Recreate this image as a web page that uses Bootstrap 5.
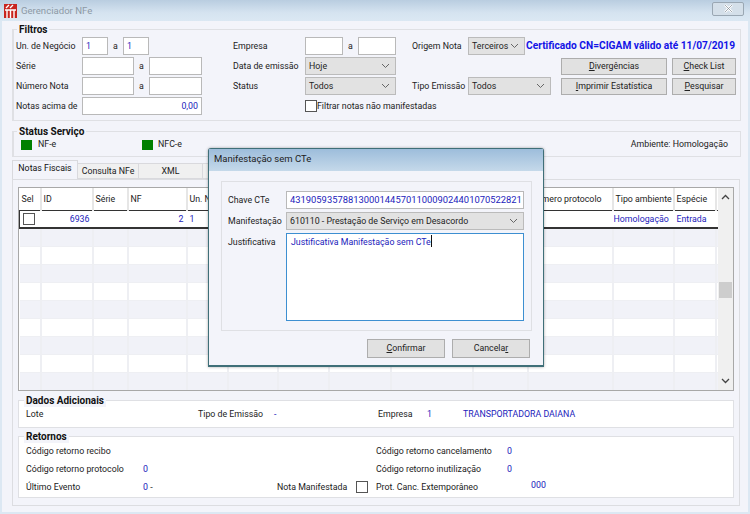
<!DOCTYPE html>
<html lang="pt-BR">
<head>
  <meta charset="UTF-8" />
  <title>Gerenciador NFe</title>
  <link href="https://cdn.jsdelivr.net/npm/bootstrap@5.3.2/dist/css/bootstrap.min.css" rel="stylesheet">
  <style>
    html, body { margin: 0; height: 514px; overflow: hidden; }
    body { font-family: Roboto, "Liberation Sans", sans-serif; font-size: 8.8px; line-height: 14px; color: #222; background: #dce8f3; white-space: nowrap; }
    .win { position: relative; width: 750px; height: 514px; }
    .win-title { height: 21px; background: linear-gradient(#b9cde0, #d5e3f0 60%, #dbe8f3); padding-left: 4px; color: #8d99a5; font-size: 9.6px; }
    .win-close { width: 32px; height: 14px; margin-right: 6px; margin-top: -4px; border: 1px solid #9aa7b3; background: #d4dfe9; border-radius: 2px; }
    .win-body { margin: 0 2px; height: 491px; background: #f3f4fa; padding: 8px 7px 0 10px; }
    .grp { position: relative; border: 1px solid #dfe0e4; border-left-width: 2px; background: #f3f4fa; }
    .grp-title { position: absolute; top: -7px; left: 3px; padding: 0 2px; font-weight: 700; font-size: 10px; color: #111; background: #f3f4fa; line-height: 13px; }
    .filtros { height: 92px; padding: 6px 0 0 2px; }
    .fcol { flex: none; }
    .frow { display: flex; align-items: center; height: 20px; }
    .lbl { flex: none; }
    .box { flex: none; height: 18px; border: 1px solid #b9b9b9; background: #fff; color: #2222bb; padding: 0 3px; line-height: 16px; }
    .sel { flex: none; height: 18px; border: 1px solid #bbb; background: #e2e2e2; padding: 0 3px; line-height: 16px; display: flex; justify-content: space-between; align-items: center; }
    .sel svg { flex: none; margin-right: 2px; }
    .wbtn { flex: none; height: 17px; border: 1px solid #adadad; background: #e1e1e1; text-align: center; line-height: 15px; padding: 0; color: #222; }
    .wbtn u { text-underline-offset: 1px; }
    .sq { flex: none; display: inline-block; width: 12px; height: 12px; border: 1px solid #555; background: #fff; }
    .cert { color: #1414e6; font-weight: 700; font-size: 10.2px; white-space: nowrap; }
    .st-grp { height: 26px; margin-top: 10px; padding: 5px 0 0 7px; }
    .led { flex: none; width: 11px; height: 10px; background: #008000; }
    .tabs-row { display: flex; height: 16px; margin-top: 6px; align-items: flex-end; }
    .tab-on { width: 66px; height: 19px; border: 1px solid #d9d9dd; border-bottom: 0; background: #f3f4fa; text-align: center; position: relative; z-index: 2; color: #111; line-height: 15px; }
    .tab-off { height: 16px; border: 1px solid #d9d9dd; border-left: 0; background: #f0f0f0; text-align: center; line-height: 15px; }
    .tab-panel { height: 327px; border: 1px solid #dcdde1; background: #f3f4fa; padding: 7px 5px 0 5px; margin-right: 1px; }
    .grid-wrap { position: relative; height: 204px; border: 1px solid #a8a8a8; background: #fff; overflow: hidden; }
    .grid-t { table-layout: fixed; width: 699px; margin: 0; border-collapse: collapse; }
    .grid-t th, .grid-t td { padding: 0 2px; border: 0; border-right: 2px solid #eeeff3; font-weight: 400; overflow: hidden; height: 18px; box-shadow: none; background: transparent; font-size: 8.8px; }
    .grid-t thead th { height: 22px; color: #222; border-right-color: #e6e6e6; vertical-align: top; padding-top: 4px; }
    .grid-t tbody td { border-bottom: 1px solid #eeeff3; }
    .grid-t tbody tr.cur td { height: 18px; border-right-color: transparent; color: #2222bb; border-top: 1px solid #333; border-bottom: 2px solid #333; padding-top: 1px; }
    .grid-t tbody tr.cur td:first-child { border-left: 1px solid #333; }
    .grid-t tbody tr.cur td:last-child { border-right: 1px solid #333; }
    .grid-t tbody tr.cur td.tight { padding-left: 0; }
    .grid-t tbody tr.alt td { background: #f1f2f8; }
    .pick { display: block; margin: 1px 0 0 1px; }
    .sbar { position: absolute; top: 0; right: 0; width: 15px; height: 100%; background: #f0f0f0; }
    .sthumb { position: absolute; top: 94px; left: 1px; width: 13px; height: 16px; background: #cdcdcd; }
    .sbar svg { position: absolute; left: 3px; }
    .dados { height: 28px; margin-top: 9px; background: #fff; padding: 6px 0 0 7px; }
    .grp-white { background: #fff; border-left-width: 1px; }
    .grp-white .grp-title { left: 5px; }
    .grp-white span { flex: none; }
    .ret { height: 62px; margin-top: 8px; padding: 7px 0 0 7px; }
    .blue { color: #2222bb; }
    .dlg { position: absolute; left: 208px; top: 148px; width: 336px; height: 219px; z-index: 5; background: #f3f4fa; border: 1px solid #3f6f78; border-bottom-width: 2px; border-radius: 3px 3px 0 0; box-shadow: 0 0 3px rgba(0,0,0,.35); }
    .dlg-title { height: 22px; background: linear-gradient(#9dbddb, #c5d9ea); font-size: 9.5px; line-height: 20px; padding-left: 5px; color: #222; }
    .dlg-grp { margin: 10px 11px 0 12px; height: 150px; border: 1px solid #dfe0e4; padding: 9px 7px 0 6px; }
    .drow { display: flex; margin-bottom: 3px; }
    .drow .lbl { width: 58px; padding-top: 2px; }
    .dlg .box, .dlg .sel { flex: 1 1 0; min-width: 0; }
    .dlg .box { font-size: 9.4px; }
    .dlg .ta { flex: 1; height: 88px; border: 1px solid #3d8fd1; background: #fff; color: #2222bb; padding: 1px 4px; }
    .caret-bar { display: inline-block; width: 1px; height: 12px; background: #111; vertical-align: -2px; }
    .dlg-btns { display: flex; justify-content: flex-end; gap: 7px; margin: 8px 13px 0 0; }
    .dlg-btns .wbtn { width: 78px; height: 19px; line-height: 17px; }
  </style>
</head>
<body>
<div class="win">
  <div class="win-title d-flex align-items-center justify-content-between">
    <div class="d-flex align-items-center gap-1">
      <svg width="13" height="14" viewBox="0 0 13 14"><rect width="13" height="14" fill="#c8241e"/><path d="M1 6h11M3 6v8M6.500 6v8M10 6v8M2 4l3-3M6 4l3-3" stroke="#fff" stroke-width="1.400" fill="none"/></svg>
      <span>Gerenciador NFe</span>
    </div>
    <div class="win-close d-flex align-items-center justify-content-center">
      <svg width="11" height="9" viewBox="0 0 11 9"><path d="M2 1l7 7M9 1L2 8" stroke="#fff" stroke-width="2.400"/><path d="M2 1l7 7M9 1L2 8" stroke="#7c8790" stroke-width=".7"/></svg>
    </div>
  </div>
  <div class="win-body">
    <div class="grp filtros d-flex">
      <div class="fcol" style="width:217px">
        <div class="frow"><span class="lbl" style="width:66px">Un. de Negócio</span><span class="box" style="width:26px">1</span><span class="lbl text-center" style="width:15px">a</span><span class="box" style="width:26px">1</span></div>
        <div class="frow"><span class="lbl" style="width:66px">Série</span><span class="box" style="width:52px"></span><span class="lbl text-center" style="width:15px">a</span><span class="box" style="width:53px"></span></div>
        <div class="frow"><span class="lbl" style="width:66px">Número Nota</span><span class="box" style="width:52px"></span><span class="lbl text-center" style="width:15px">a</span><span class="box" style="width:53px"></span></div>
        <div class="frow"><span class="lbl" style="width:66px">Notas acima de</span><span class="box text-end" style="width:120px">0,00</span></div>
      </div>
      <div class="fcol" style="width:179px">
        <div class="frow"><span class="lbl" style="width:72px">Empresa</span><span class="box" style="width:38px"></span><span class="lbl text-center" style="width:15px">a</span><span class="box" style="width:38px"></span></div>
        <div class="frow"><span class="lbl" style="width:72px">Data de emissão</span><span class="sel" style="width:91px">Hoje<svg width="9" height="6" viewBox="0 0 9 6"><path d="M1 1l3.500 3.500L8 1" stroke="#666" fill="none"/></svg></span></div>
        <div class="frow"><span class="lbl" style="width:72px">Status</span><span class="sel" style="width:91px">Todos<svg width="9" height="6" viewBox="0 0 9 6"><path d="M1 1l3.500 3.500L8 1" stroke="#666" fill="none"/></svg></span></div>
        <div class="frow"><span class="lbl" style="width:72px"></span><span class="sq"></span><span class="lbl">Filtrar notas não manifestadas</span></div>
      </div>
      <div class="fcol">
        <div class="frow"><span class="lbl text-end" style="width:49px">Origem Nota</span><span class="sel" style="width:57px;margin-left:7px">Terceiros<svg width="9" height="6" viewBox="0 0 9 6"><path d="M1 1l3.500 3.500L8 1" stroke="#666" fill="none"/></svg></span><span class="cert" style="margin-left:1px">Certificado CN=CIGAM válido até 11/07/2019</span></div>
        <div class="frow"><span class="lbl" style="width:149px"></span><button class="wbtn" style="width:106px"><u>D</u>ivergências</button><button class="wbtn" style="width:64px;margin-left:5px"><u>C</u>heck List</button></div>
        <div class="frow"><span class="lbl text-end" style="width:49px">Tipo Emissão</span><span class="sel" style="width:83px;margin-left:7px">Todos<svg width="9" height="6" viewBox="0 0 9 6"><path d="M1 1l3.500 3.500L8 1" stroke="#666" fill="none"/></svg></span><button class="wbtn" style="width:106px;margin-left:10px"><u>I</u>mprimir Estatística</button><button class="wbtn" style="width:64px;margin-left:5px"><u>P</u>esquisar</button></div>
      </div>
      <span class="grp-title">Filtros</span>
    </div>
    <div class="grp st-grp d-flex align-items-start">
      <span class="grp-title">Status Serviço</span>
      <span class="led" style="margin-top:3px"></span><span style="margin-left:6px;width:104px">NF-e</span>
      <span class="led" style="margin-top:3px"></span><span style="margin-left:5px">NFC-e</span>
      <span class="ms-auto" style="margin-right:12px">Ambiente: Homologação</span>
    </div>
    <div class="tabs-row">
      <div class="tab-on">Notas Fiscais</div>
      <div class="tab-off" style="width:61px">Consulta NFe</div>
      <div class="tab-off" style="width:64px">XML</div>
      <div class="tab-off" style="width:60px"></div>
    </div>
    <div class="tab-panel">
      <div class="grid-wrap">
        <table class="table grid-t">
          <colgroup><col style="width:21px"><col style="width:52px"><col style="width:35px"><col style="width:59px"><col style="width:41px"><col style="width:50px"><col style="width:51px"><col style="width:62px"><col style="width:82px"><col style="width:55px"><col style="width:85px"><col style="width:61px"><col style="width:42px"><col style="width:3px"></colgroup>
          <thead><tr><th>Sel</th><th>ID</th><th>Série</th><th>NF</th><th>Un. N</th><th></th><th></th><th></th><th></th><th></th><th>Número protocolo</th><th>Tipo ambiente</th><th>Espécie</th><th></th></tr></thead>
          <tbody>
            <tr class="cur"><td><span class="sq pick"></span></td><td class="text-end">6936</td><td></td><td class="text-end">2</td><td>1</td><td></td><td></td><td></td><td></td><td></td><td></td><td class="tight">Homologação</td><td>Entrada</td><td></td></tr>
            <tr class="alt"><td></td><td></td><td></td><td></td><td></td><td></td><td></td><td></td><td></td><td></td><td></td><td></td><td></td><td></td></tr>
            <tr><td></td><td></td><td></td><td></td><td></td><td></td><td></td><td></td><td></td><td></td><td></td><td></td><td></td><td></td></tr>
            <tr class="alt"><td></td><td></td><td></td><td></td><td></td><td></td><td></td><td></td><td></td><td></td><td></td><td></td><td></td><td></td></tr>
            <tr><td></td><td></td><td></td><td></td><td></td><td></td><td></td><td></td><td></td><td></td><td></td><td></td><td></td><td></td></tr>
            <tr class="alt"><td></td><td></td><td></td><td></td><td></td><td></td><td></td><td></td><td></td><td></td><td></td><td></td><td></td><td></td></tr>
            <tr><td></td><td></td><td></td><td></td><td></td><td></td><td></td><td></td><td></td><td></td><td></td><td></td><td></td><td></td></tr>
            <tr class="alt"><td></td><td></td><td></td><td></td><td></td><td></td><td></td><td></td><td></td><td></td><td></td><td></td><td></td><td></td></tr>
            <tr><td></td><td></td><td></td><td></td><td></td><td></td><td></td><td></td><td></td><td></td><td></td><td></td><td></td><td></td></tr>
            <tr class="alt"><td></td><td></td><td></td><td></td><td></td><td></td><td></td><td></td><td></td><td></td><td></td><td></td><td></td><td></td></tr>
          </tbody>
        </table>
        <div class="sbar">
          <svg style="top:6px" width="9" height="6" viewBox="0 0 9 6"><path d="M1 5l3.500-3.500L8 5" stroke="#444" stroke-width="1.300" fill="none"/></svg>
          <div class="sthumb"></div>
          <svg style="bottom:6px" width="9" height="6" viewBox="0 0 9 6"><path d="M1 1l3.500 3.500L8 1" stroke="#444" stroke-width="1.300" fill="none"/></svg>
        </div>
      </div>
      <div class="grp grp-white dados d-flex">
        <span class="grp-title">Dados Adicionais</span>
        <span style="width:172px">Lote</span>
        <span style="width:76px">Tipo de Emissão</span><span class="blue" style="width:104px">-</span>
        <span style="width:49px">Empresa</span><span class="blue" style="width:36px">1</span><span class="blue">TRANSPORTADORA DAIANA</span>
      </div>
      <div class="grp grp-white ret">
        <span class="grp-title">Retornos</span>
        <div class="d-flex" style="height:18px"><span style="width:350px">Código retorno recibo</span><span style="width:131px">Código retorno cancelamento</span><span class="blue">0</span></div>
        <div class="d-flex" style="height:17px"><span style="width:117px">Código retorno protocolo</span><span class="blue" style="width:233px">0</span><span style="width:131px">Código retorno inutilização</span><span class="blue">0</span></div>
        <div class="d-flex align-items-center" style="height:16px"><span style="width:117px">Último Evento</span><span class="blue" style="width:134px">0 <span class="text-body">-</span></span><span style="width:79px">Nota Manifestada</span><span class="sq" style="margin-right:8px"></span><span style="width:155px">Prot. Canc. Extemporâneo</span><span class="blue" style="margin-top:-4px">000</span></div>
      </div>
    </div>
  </div>

  <div class="dlg">
    <div class="dlg-title">Manifestação sem CTe</div>
    <div class="dlg-grp">
      <div class="drow"><span class="lbl">Chave CTe</span><span class="box">43190593578813000144570110009024401070522821</span></div>
      <div class="drow"><span class="lbl">Manifestação</span><span class="sel">610110 - Prestação de Serviço em Desacordo<svg width="9" height="6" viewBox="0 0 9 6"><path d="M1 1l3.500 3.500L8 1" stroke="#666" fill="none"/></svg></span></div>
      <div class="drow"><span class="lbl">Justificativa</span><div class="ta">Justificativa Manifestação sem CTe<span class="caret-bar"></span></div></div>
    </div>
    <div class="dlg-btns">
      <button class="wbtn"><u>C</u>onfirmar</button>
      <button class="wbtn">Cancela<u>r</u></button>
    </div>
  </div>
</div>
<script src="https://cdn.jsdelivr.net/npm/bootstrap@5.3.2/dist/js/bootstrap.bundle.min.js"></script>
</body>
</html>
